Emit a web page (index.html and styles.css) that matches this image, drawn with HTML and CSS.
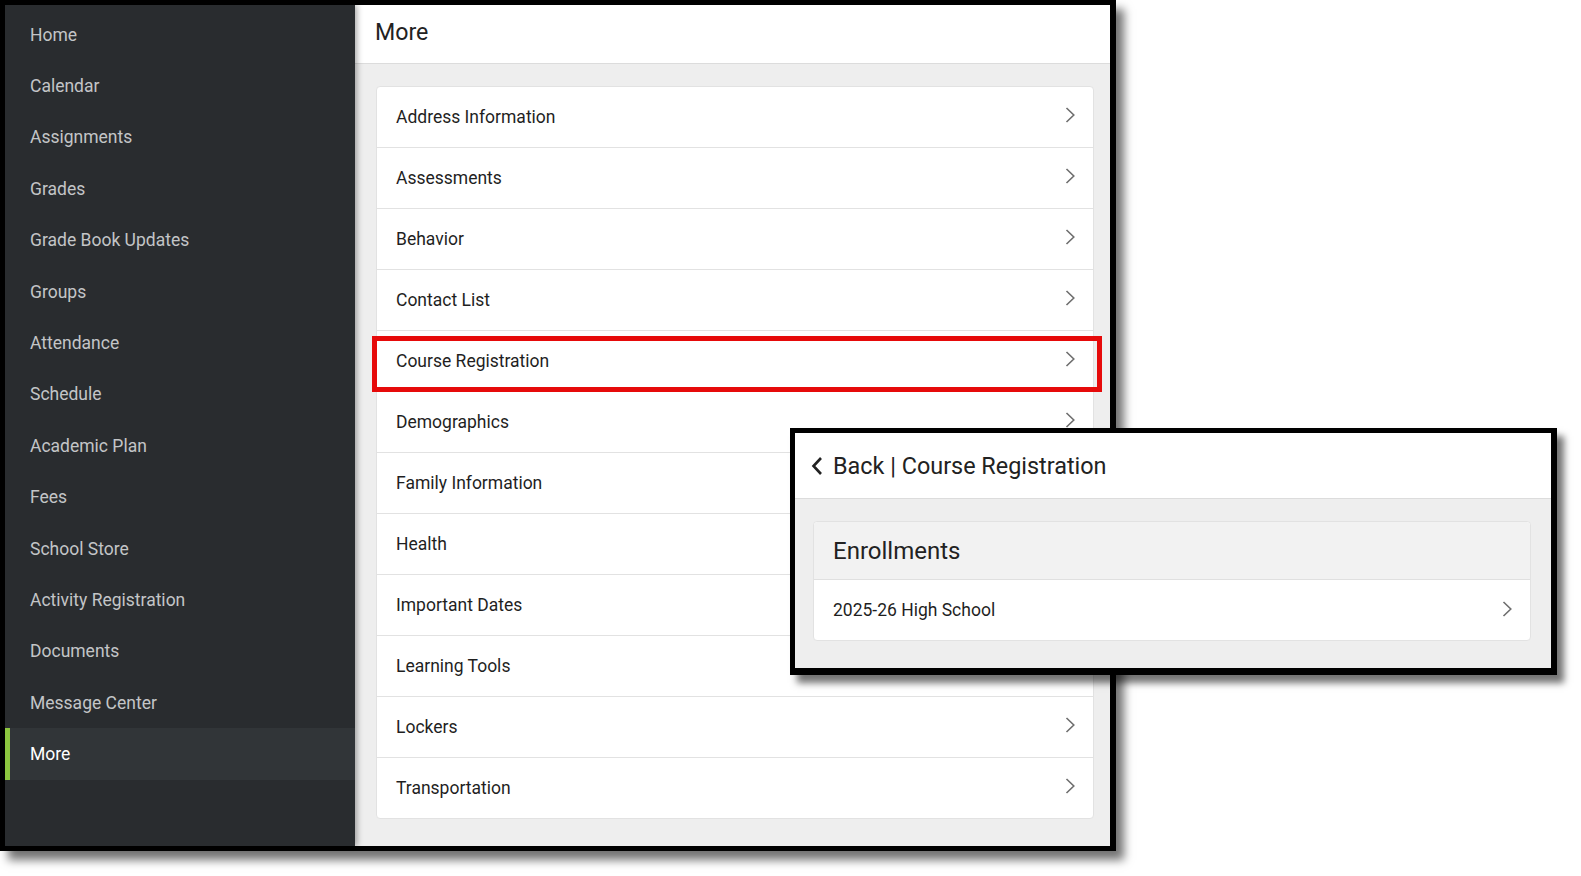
FILE: index.html
```html
<!DOCTYPE html>
<html lang="en">
<head>
<meta charset="utf-8">
<title>More</title>
<link rel="stylesheet" href="styles.css">
</head>
<body>
<div class="canvas">
  <div class="frame">
    <nav class="sidebar">
      <div class="nav-item">Home</div>
      <div class="nav-item">Calendar</div>
      <div class="nav-item">Assignments</div>
      <div class="nav-item">Grades</div>
      <div class="nav-item">Grade Book Updates</div>
      <div class="nav-item">Groups</div>
      <div class="nav-item">Attendance</div>
      <div class="nav-item">Schedule</div>
      <div class="nav-item">Academic Plan</div>
      <div class="nav-item">Fees</div>
      <div class="nav-item">School Store</div>
      <div class="nav-item">Activity Registration</div>
      <div class="nav-item">Documents</div>
      <div class="nav-item">Message Center</div>
      <div class="nav-item active">More</div>
    </nav>
    <main class="main">
      <header class="main-header">More</header>
      <div class="main-body">
        <div class="card">
          <div class="row"><span>Address Information</span><svg class="chev" viewBox="0 0 10 16"><path d="M1.5 1 L8.8 8 L1.5 15"/></svg></div>
          <div class="row"><span>Assessments</span><svg class="chev" viewBox="0 0 10 16"><path d="M1.5 1 L8.8 8 L1.5 15"/></svg></div>
          <div class="row"><span>Behavior</span><svg class="chev" viewBox="0 0 10 16"><path d="M1.5 1 L8.8 8 L1.5 15"/></svg></div>
          <div class="row"><span>Contact List</span><svg class="chev" viewBox="0 0 10 16"><path d="M1.5 1 L8.8 8 L1.5 15"/></svg></div>
          <div class="row highlighted"><span>Course Registration</span><svg class="chev" viewBox="0 0 10 16"><path d="M1.5 1 L8.8 8 L1.5 15"/></svg><div class="red-box"></div></div>
          <div class="row"><span>Demographics</span><svg class="chev" viewBox="0 0 10 16"><path d="M1.5 1 L8.8 8 L1.5 15"/></svg></div>
          <div class="row"><span>Family Information</span><svg class="chev" viewBox="0 0 10 16"><path d="M1.5 1 L8.8 8 L1.5 15"/></svg></div>
          <div class="row"><span>Health</span><svg class="chev" viewBox="0 0 10 16"><path d="M1.5 1 L8.8 8 L1.5 15"/></svg></div>
          <div class="row"><span>Important Dates</span><svg class="chev" viewBox="0 0 10 16"><path d="M1.5 1 L8.8 8 L1.5 15"/></svg></div>
          <div class="row"><span>Learning Tools</span><svg class="chev" viewBox="0 0 10 16"><path d="M1.5 1 L8.8 8 L1.5 15"/></svg></div>
          <div class="row"><span>Lockers</span><svg class="chev" viewBox="0 0 10 16"><path d="M1.5 1 L8.8 8 L1.5 15"/></svg></div>
          <div class="row"><span>Transportation</span><svg class="chev" viewBox="0 0 10 16"><path d="M1.5 1 L8.8 8 L1.5 15"/></svg></div>
        </div>
      </div>
    </main>
  </div>

  <section class="popup">
    <header class="popup-header">
      <svg class="back-chev" viewBox="0 0 12 20"><path d="M10 2 L2.5 10 L10 18"/></svg>
      <span>Back | Course Registration</span>
    </header>
    <div class="popup-body">
      <div class="enroll-card">
        <div class="enroll-title">Enrollments</div>
        <div class="enroll-row"><span>2025-26 High School</span><svg class="chev" viewBox="0 0 10 16"><path d="M1.5 1 L8.8 8 L1.5 15"/></svg></div>
      </div>
    </div>
  </section>
</div>
</body>
</html>
```

FILE: styles.css
```css
* { box-sizing: border-box; }

html, body {
  margin: 0;
  padding: 0;
  background: #ffffff;
}

body {
  font-family: Roboto, "Liberation Sans", Arial, sans-serif;
  width: 1581px;
  height: 876px;
  overflow: hidden;
}

.canvas {
  position: relative;
  width: 1581px;
  height: 876px;
}

.frame {
  display: flex;
  width: 1116px;
  height: 851px;
  border-style: solid;
  border-color: #000;
  border-width: 5px 6px 5px 5px;
  box-shadow: 8px 9px 9px rgba(0, 0, 0, 0.55);
}

/* Sidebar */
.sidebar {
  position: relative;
  z-index: 1;
  width: 350px;
  flex: none;
  background: #292c2f;
  padding-top: 4px;
  display: flex;
  flex-direction: column;
  box-shadow: 2px 0 6px rgba(0, 0, 0, 0.35);
}

.nav-item {
  height: 51.4px;
  flex: none;
  display: flex;
  align-items: center;
  font-size: 17.5px;
  color: #c3c5c7;
  border-left: 5px solid transparent;
  padding-left: 20px;
}

.nav-item.active {
  background: #313538;
  color: #ffffff;
  border-left-color: #8dc63f;
}

/* Main */
.main {
  flex: 1;
  background: #eeeeee;
  display: flex;
  flex-direction: column;
}

.main-header {
  height: 59px;
  flex: none;
  background: #ffffff;
  border-bottom: 1px solid #dcdcdc;
  display: flex;
  align-items: center;
  padding-left: 20px;
  padding-bottom: 4px;
  font-size: 23.2px;
  color: #222;
}

.main-body {
  padding: 22px 16px 0 21px;
}

.card {
  background: #ffffff;
  border: 1px solid #e2e2e2;
  border-radius: 4px;
}

.row {
  position: relative;
  height: 61px;
  display: flex;
  align-items: center;
  justify-content: space-between;
  padding: 0 18px 0 19px;
  border-bottom: 1px solid #e2e2e2;
  font-size: 17.5px;
  color: #1f1f1f;
}

.row:last-child {
  border-bottom: none;
  height: 60px;
}

.chev {
  width: 10px;
  height: 16px;
  flex: none;
  fill: none;
  stroke: #6e6e6e;
  stroke-width: 1.6;
  margin-top: -4px;
}

.red-box {
  position: absolute;
  left: -5px;
  right: -9px;
  top: 5px;
  bottom: -1px;
  border: 5px solid #e60a0a;
  pointer-events: none;
}

/* Popup overlay */
.popup {
  position: absolute;
  left: 790px;
  top: 428px;
  width: 767px;
  height: 247px;
  border-style: solid;
  border-color: #000;
  border-width: 5px 6px 7px 5px;
  background: #eeeeee;
  box-shadow: 7px 8px 7px rgba(0, 0, 0, 0.55);
  display: flex;
  flex-direction: column;
}

.popup-header {
  height: 66px;
  flex: none;
  background: #ffffff;
  border-bottom: 1px solid #dcdcdc;
  display: flex;
  align-items: center;
  padding-left: 16px;
  gap: 10px;
  font-size: 23.4px;
  color: #222;
}

.back-chev {
  width: 12px;
  height: 20px;
  fill: none;
  stroke: #222;
  stroke-width: 2.6;
}

.popup-body {
  padding: 22px 20px 0 18px;
}

.enroll-card {
  background: #ffffff;
  border: 1px solid #e2e2e2;
  border-radius: 4px;
}

.enroll-title {
  height: 58px;
  background: #f2f2f2;
  border-bottom: 1px solid #e0e0e0;
  display: flex;
  align-items: center;
  padding-left: 19px;
  font-size: 24px;
  color: #222;
  border-radius: 4px 4px 0 0;
}

.enroll-row {
  height: 60px;
  display: flex;
  align-items: center;
  justify-content: space-between;
  padding: 0 18px 0 19px;
  font-size: 17.5px;
  color: #1f1f1f;
}

.enroll-row .chev {
  margin-top: -2px;
}
```
